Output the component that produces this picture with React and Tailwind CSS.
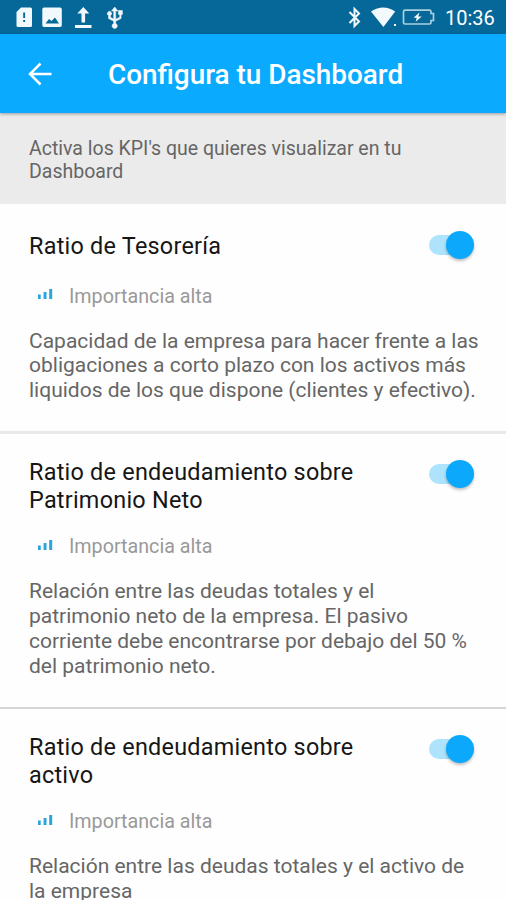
import React, { useState } from 'react';

const kpis = [
  {
    id: 'tesoreria',
    title: ['Ratio de Tesorería'],
    body: [
      'Capacidad de la empresa para hacer frente a las',
      'obligaciones a corto plazo con los activos más',
      'liquidos de los que dispone (clientes y efectivo).',
    ],
    card: 'h-[227px] pt-[29px]',
    level: 'mt-[24px]',
    toggle: '-mt-[2px]',
  },
  {
    id: 'patrimonio',
    title: ['Ratio de endeudamiento sobre', 'Patrimonio Neto'],
    body: [
      'Relación entre las deudas totales y el',
      'patrimonio neto de la empresa. El pasivo',
      'corriente debe encontrarse por debajo del 50 %',
      'del patrimonio neto.',
    ],
    card: 'h-[276px] border-t-3 border-[#e8e8e8] pt-[25px]',
    level: 'mt-[21px]',
    toggle: 'mt-[1px]',
  },
  {
    id: 'activo',
    title: ['Ratio de endeudamiento sobre', 'activo'],
    body: ['Relación entre las deudas totales y el activo de', 'la empresa'],
    card: 'h-[276px] border-t-2 border-[#d6d6d6] pt-[25px]',
    level: 'mt-[21px]',
    toggle: 'mt-[1px]',
  },
];

function StatusBar() {
  return (
    <div className="flex h-[34px] shrink-0 items-center bg-[#056899] pl-4 pr-[11px] text-white">
      {/* SD card, picture, upload, usb */}
      <svg className="h-[34px] w-[112px]" viewBox="16 0 112 34" fill="#f2f9fc">
        <path fillRule="evenodd" d="M21 7.500h9.500q1.500 0 1.500 1.500v16.500q0 1.500-1.500 1.500h-12.500q-1.500 0-1.500-1.500v-13.500zM23.200 12.500v5.500h1.900v-5.500zM23.200 20v2h1.900v-2z" />
        <path fillRule="evenodd" d="M44 7.500h16q1.800 0 1.800 1.800v16q0 1.700-1.800 1.700h-16q-1.700 0-1.700-1.700v-16q0-1.800 1.700-1.800zM45.500 23.500h13.500l-4-6-3.500 3.500-2.500-2z" />
        <path d="M83.300 7l6 6.500h-4.200v9h-3.600v-9h-4.200zM75 25h16.500v3h-16.500z" />
        <path d="M114.700 7l3.200 4h-2.200v8.200l4-2v-2.700h-1.300v-4h4v4h-1.300v3.900l-5.400 2.800v2.200a2.600 2.600 0 1 1-2 0v-2.200l-5.200-2.700v-3a2.100 2.100 0 1 1 2 0v1.800l3.200 1.700v-8h-2.200z" stroke="#f2f9fc" strokeWidth="0.500" />
      </svg>
      <svg className="ml-auto h-[34px] w-[92px]" viewBox="345 0 92 34" fill="none">
        <path d="M349.500 12l9.500 9.500-4.500 4.500v-17l4.500 4.500-9.500 9.500" stroke="#f2f9fc" strokeWidth="2" />
        <path d="M371 11.500q12.200-8 24.200 0l-11.800 15.500z" fill="#f2f9fc" />
        <path d="M394 24h2v2h-2z" fill="#f2f9fc" />
        <path d="M405 10.200h24.500q1.500 0 1.500 1.500v1.800h2.500v7h-2.500v2q0 1.500-1.500 1.500h-24.500q-1.500 0-1.500-1.500v-10.800q0-1.500 1.500-1.500z" stroke="#a9cfe0" strokeWidth="1.700" />
        <path d="M419.500 12.500l-6 5.200h3.200l-1 4 6-5.200h-3.400z" fill="#f2f9fc" />
      </svg>
      <span className="ml-2 w-[50px] whitespace-nowrap pt-[2px] text-[20px] leading-[34px]">10:36</span>
    </div>
  );
}

function Toggle({ on, onChange, className }) {
  return (
    <button
      type="button"
      role="switch"
      aria-checked={on}
      onClick={onChange}
      className={`flex h-[28px] w-[45px] shrink-0 items-center ${className}`}
    >
      <span className={`flex h-[20px] w-full items-center rounded-full ${on ? 'justify-end bg-[#ade3fd]' : 'justify-start bg-gray-300'}`}>
        <span className={`h-[28px] w-[28px] rounded-full shadow-[0_2px_3px_rgba(0,0,0,0.25)] ${on ? 'bg-[#0ca8fb]' : 'bg-gray-50'}`} />
      </span>
    </button>
  );
}

function KpiCard({ kpi }) {
  const [on, setOn] = useState(true);

  return (
    <section className={`shrink-0 whitespace-nowrap bg-[#fefefe] pl-[29px] pr-8 ${kpi.card}`}>
      <div className="flex items-start justify-between">
        <h2 className="text-[23.4px] leading-[27.6px] tracking-[0.25px] text-[#161616]">
          {kpi.title.map((line) => (
            <span key={line} className="block">{line}</span>
          ))}
        </h2>
        <Toggle on={on} onChange={() => setOn(!on)} className={kpi.toggle} />
      </div>

      <div className={`flex h-6 items-center ${kpi.level}`}>
        <svg className="-mt-[5px] ml-[9px] h-[12px] w-[15px]" viewBox="0 0 15 12" fill="#2ba3dc">
          <path d="M0 6.500h2.700v4.500h-2.700zM5.600 4h2.900v7h-2.900zM11.200 1h3v10h-3z" />
        </svg>
        <span className="ml-4 text-[19.700px] leading-6 text-[#999]">Importancia alta</span>
      </div>

      <p className="mt-[20px] text-[21px] leading-[24.8px] text-[#666]">
        {kpi.body.map((line) => (
          <span key={line} className="block">{line}</span>
        ))}
      </p>
    </section>
  );
}

export default function App() {
  return (
    <div className="flex h-[900px] w-[506px] flex-col overflow-hidden bg-[#fefefe] font-[Roboto,sans-serif]">
      <StatusBar />

      <header className="z-10 flex h-[79px] shrink-0 items-center bg-[#0aaaff] pl-[28px] text-white shadow-[0_1px_3px_rgba(0,0,0,0.35)]">
        <svg className="h-6 w-6" viewBox="0 0 24 24" fill="none" stroke="#fff" strokeWidth="2.500">
          <path d="M12.500 1.500l-10.500 10.500 10.500 10.500M2 12h21.500" />
        </svg>
        <h1 className="ml-[56px] whitespace-nowrap pt-[3px] text-[27.900px] font-medium leading-8">Configura tu Dashboard</h1>
      </header>

      <p className="h-[91px] shrink-0 whitespace-nowrap bg-[#ebebeb] pl-[29px] pt-[24px] text-[19.500px] leading-[23px] text-[#666]">
        Activa los KPI's que quieres visualizar en tu
        <br />
        Dashboard
      </p>

      <main className="flex flex-col">
        {kpis.map((kpi) => (
          <KpiCard key={kpi.id} kpi={kpi} />
        ))}
      </main>
    </div>
  );
}
